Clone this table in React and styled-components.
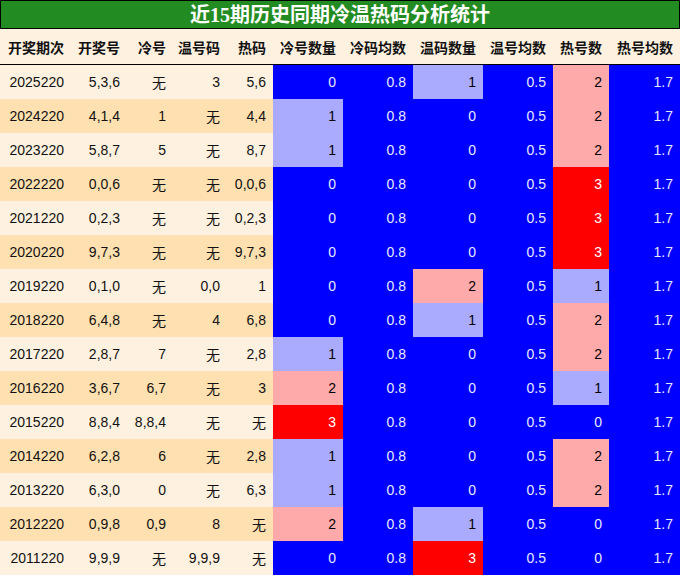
import React from 'react';
import styled, { createGlobalStyle } from 'styled-components';

const GlobalStyle = createGlobalStyle`
  html, body {
    margin: 0;
    padding: 0;
    background: #ffffff;
  }
  body {
    font-family: "Liberation Sans", "Noto Sans CJK SC", sans-serif;
  }
`;

const COLS = '71px 56px 46px 54px 46px 70px 70px 70px 70px 56px 71px';

const Page = styled.div`
  width: 680px;
  display: flex;
  flex-direction: column;
`;

const TitleBar = styled.div`
  height: 27px;
  border: 1px solid #000;
  background: #228b22;
  color: #ffffff;
  display: flex;
  align-items: center;
  justify-content: center;
  font-family: "Liberation Serif", "Noto Sans CJK SC", serif;
  font-weight: bold;
  font-size: 20px;
  line-height: 1;
`;

const Row = styled.div`
  display: grid;
  grid-template-columns: ${COLS};
  height: ${(p) => (p.$head ? '35px' : '34px')};
  background: ${(p) => p.$bg};
  border-bottom: ${(p) => (p.$head ? '1px solid #000' : 'none')};
`;

const HeadCell = styled.div`
  display: flex;
  align-items: center;
  justify-content: flex-end;
  padding-right: 7px;
  font-size: 14px;
  font-weight: bold;
  color: #111;
  white-space: nowrap;
`;

const toneColors = {
  0: { bg: '#0000ff', fg: '#e8e8ff' },
  1: { bg: '#aaaaff', fg: '#000000' },
  2: { bg: '#ffaaaa', fg: '#000000' },
  3: { bg: '#ff0000', fg: '#ffffff' },
};

const Cell = styled.div`
  display: flex;
  align-items: center;
  justify-content: flex-end;
  padding-right: 7px;
  font-size: 14px;
  color: ${(p) => p.$fg || '#111'};
  background: ${(p) => p.$bg || 'transparent'};
  white-space: nowrap;
`;

const headers = ['开奖期次', '开奖号', '冷号', '温号码', '热码', '冷号数量', '冷码均数', '温码数量', '温号均数', '热号数', '热号均数'];

const rows = [
  ['2025220', '5,3,6', '无', '3', '5,6', 0, 1, 2],
  ['2024220', '4,1,4', '1', '无', '4,4', 1, 0, 2],
  ['2023220', '5,8,7', '5', '无', '8,7', 1, 0, 2],
  ['2022220', '0,0,6', '无', '无', '0,0,6', 0, 0, 3],
  ['2021220', '0,2,3', '无', '无', '0,2,3', 0, 0, 3],
  ['2020220', '9,7,3', '无', '无', '9,7,3', 0, 0, 3],
  ['2019220', '0,1,0', '无', '0,0', '1', 0, 2, 1],
  ['2018220', '6,4,8', '无', '4', '6,8', 0, 1, 2],
  ['2017220', '2,8,7', '7', '无', '2,8', 1, 0, 2],
  ['2016220', '3,6,7', '6,7', '无', '3', 2, 0, 1],
  ['2015220', '8,8,4', '8,8,4', '无', '无', 3, 0, 0],
  ['2014220', '6,2,8', '6', '无', '2,8', 1, 0, 2],
  ['2013220', '6,3,0', '0', '无', '6,3', 1, 0, 2],
  ['2012220', '0,9,8', '0,9', '8', '无', 2, 1, 0],
  ['2011220', '9,9,9', '无', '9,9,9', '无', 0, 3, 0],
];

function CountCell({ n }) {
  const t = toneColors[n];
  return <Cell $bg={t.bg} $fg={t.fg}>{n}</Cell>;
}

function AvgCell({ value }) {
  return <Cell $bg="#0000ff" $fg="#e8e8ff">{value}</Cell>;
}

export default function App() {
  return (
    <Page>
      <GlobalStyle />
      <TitleBar>近15期历史同期冷温热码分析统计</TitleBar>
      <Row $head $bg="#fff1e0">
        {headers.map((h) => <HeadCell key={h}>{h}</HeadCell>)}
      </Row>
      {rows.map((r, i) => (
        <Row key={r[0]} $bg={i % 2 === 0 ? '#fff1e0' : '#ffe0b0'}>
          <Cell>{r[0]}</Cell>
          <Cell>{r[1]}</Cell>
          <Cell>{r[2]}</Cell>
          <Cell>{r[3]}</Cell>
          <Cell>{r[4]}</Cell>
          <CountCell n={r[5]} />
          <AvgCell value="0.8" />
          <CountCell n={r[6]} />
          <AvgCell value="0.5" />
          <CountCell n={r[7]} />
          <AvgCell value="1.7" />
        </Row>
      ))}
    </Page>
  );
}
